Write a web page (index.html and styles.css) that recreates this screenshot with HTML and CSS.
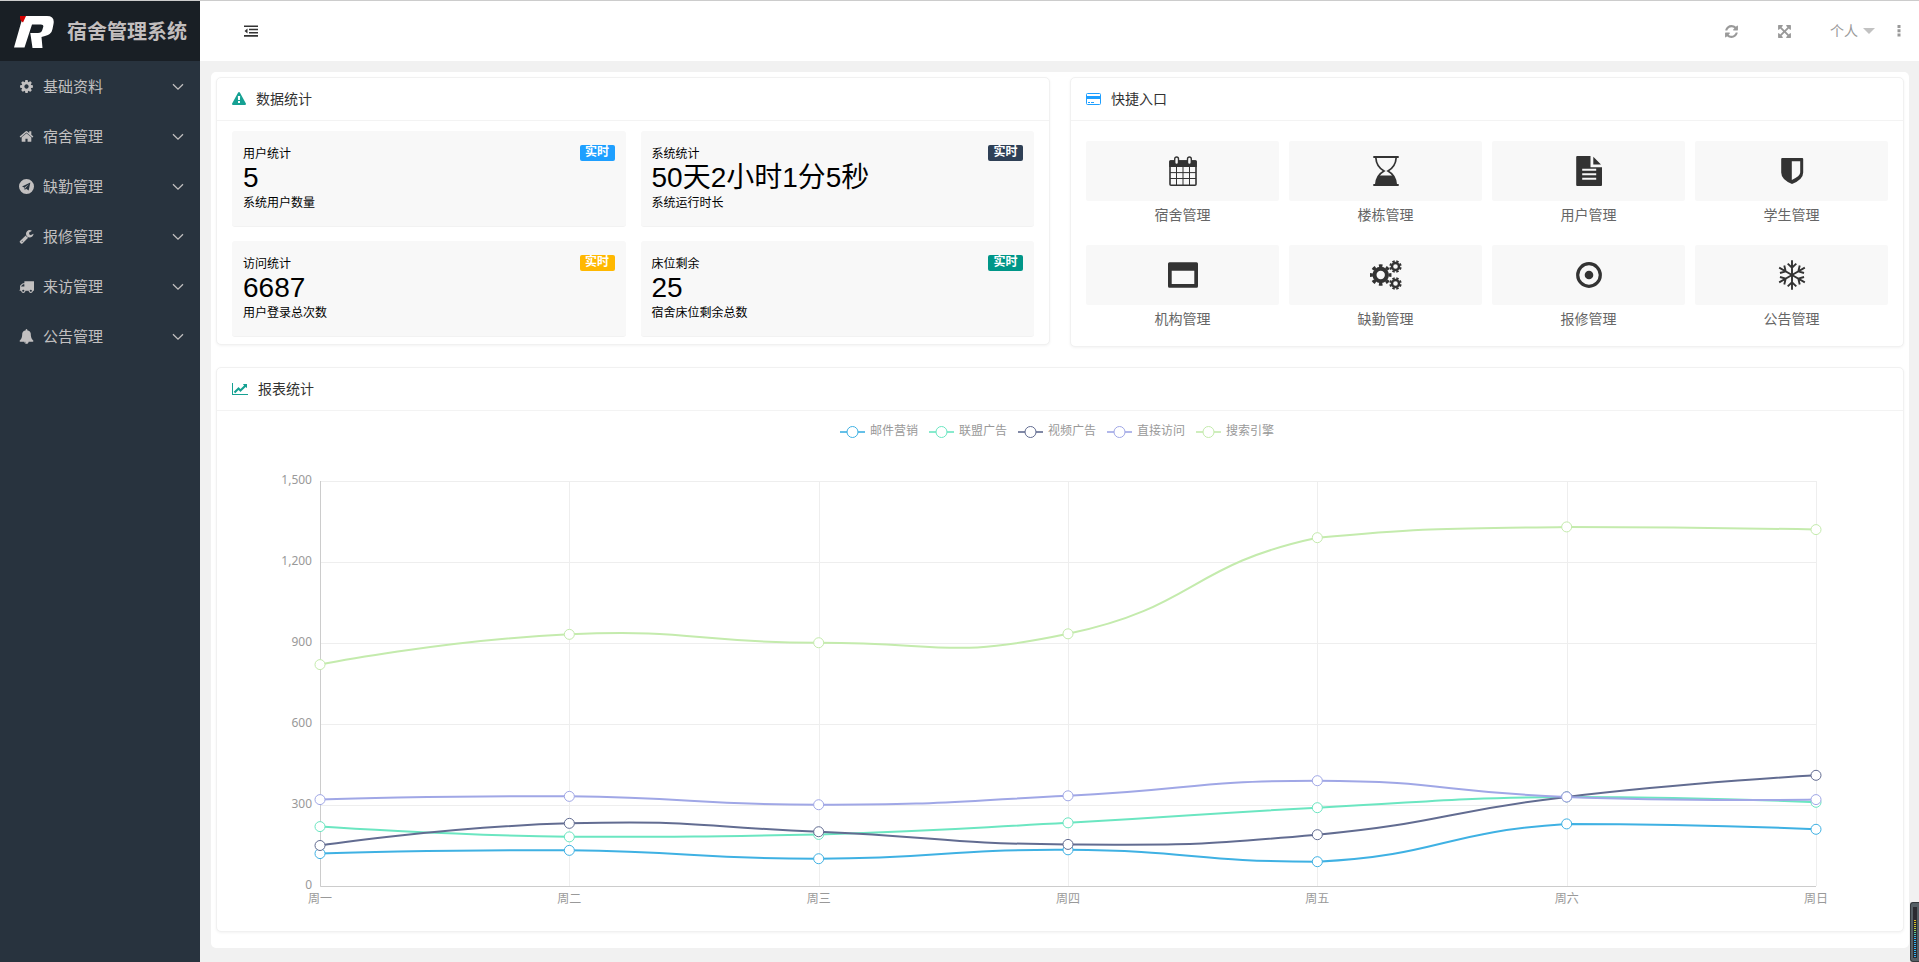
FILE: index.html
```
<!DOCTYPE html>
<html lang="zh-CN">
<head>
<meta charset="utf-8">
<title>宿舍管理系统</title>
<link rel="stylesheet" href="styles.css">
</head>
<body>
<svg class="defs" aria-hidden="true">
  <symbol id="i-chevron" viewBox="0 0 12 8"><path d="M1 1.200l5 5 5-5" fill="none" stroke="currentColor" stroke-width="1.300"/></symbol>
  <symbol id="i-cog" viewBox="0 0 1792 1792"><path d="M1152 896q0-106-75-181t-181-75-181 75-75 181 75 181 181 75 181-75 75-181zm512-109v222q0 12-8 23t-20 13l-185 28q-19 54-39 91 35 50 107 138 10 12 10 25t-9 23q-27 37-99 108t-94 71q-12 0-26-9l-138-108q-44 23-91 38-16 136-29 186-7 28-36 28h-222q-14 0-24.500-8.500t-11.500-21.500l-28-184q-49-16-90-37l-141 107q-10 9-25 9-14 0-25-11-126-114-165-168-7-10-7-23 0-12 8-23 15-21 51-66.500t54-70.500q-27-50-41-99l-183-27q-13-2-21-12.500t-8-23.500v-222q0-12 8-23t19-13l186-28q14-46 39-92-40-57-107-138-10-12-10-24 0-10 9-23 26-36 98.500-107.500t94.500-71.500q13 0 26 10l138 107q44-23 91-38 16-136 29-186 7-28 36-28h222q14 0 24.500 8.500t11.500 21.500l28 184q49 16 90 37l142-107q9-9 24-9 13 0 25 10 129 119 165 170 7 8 7 22 0 12-8 23-15 21-51 66.500t-54 70.500q26 50 41 98l183 28q13 2 21 12.500t8 23.500z"/></symbol>
  <symbol id="i-home" viewBox="0 0 1792 1792"><path d="M1472 992v480q0 26-19 45t-45 19h-384v-384h-256v384h-384q-26 0-45-19t-19-45v-480q0-1 .5-3t.5-3l575-474 575 474q1 2 1 6zm223-69l-62 74q-8 9-21 11h-3q-13 0-21-7l-692-577-692 577q-12 8-24 7-13-2-21-11l-62-74q-8-10-7-23.500t11-21.500l719-599q32-26 76-26t76 26l244 204v-195q0-14 9-23t23-9h192q14 0 23 9t9 23v408l219 182q10 8 11 21.500t-7 23.500z"/></symbol>
  <symbol id="i-plane" viewBox="0 0 14 14"><path fill-rule="evenodd" d="M7 0a7 7 0 1 1 0 14a7 7 0 1 1 0-14zM10.600 3.300L2.800 6.900l2.100 1 .5 2.400 1.200-1.300 2.400 1.700zM9.300 5L5.900 8.300l-.3 1-.2-1.600z"/></symbol>
  <symbol id="i-wrench" viewBox="0 0 1792 1792"><path d="M448 1472q0-26-19-45t-45-19-45 19-19 45 19 45 45 19 45-19 19-45zm644-420l-682 682q-37 37-90 37-52 0-91-37l-106-108q-38-36-38-90 0-53 38-91l681-681q39 98 114.500 173.500t173.500 114.500zm634-435q0 39-23 106-47 134-164.500 217.500t-258.500 83.500q-185 0-316.500-131.500t-131.500-316.500 131.500-316.500 316.500-131.500q58 0 121.500 16.500t107.500 46.500q16 11 16 28t-16 28l-293 169v224l193 107q5-3 79-48.500t135.500-81 70.500-35.500q15 0 23.500 10t8.500 25z"/></symbol>
  <symbol id="i-truck" viewBox="0 0 1792 1792"><path d="M640 1408q0-52-38-90t-90-38-90 38-38 90 38 90 90 38 90-38 38-90zm-384-512h384v-256h-158q-13 0-22 9l-195 195q-9 9-9 22v30zm1280 512q0-52-38-90t-90-38-90 38-38 90 38 90 90 38 90-38 38-90zm256-1088v1024q0 15-4 26.500t-13.500 18.500-16.500 11.500-23.500 6-22.500 2-25.500 0-22.500-.5q0 106-75 181t-181 75-181-75-75-181h-384q0 106-75 181t-181 75-181-75-75-181h-64q-3 0-22.500.5t-25.500 0-22.500-2-23.500-6-16.500-11.500-13.500-18.500-4-26.500q0-26 19-45t45-19v-320q0-8-.5-35t0-38 2.500-34.500 6.500-37 14-30.500 22.500-30l198-198q19-19 50.500-32t58.500-13h160v-192q0-26 19-45t45-19h1024q26 0 45 19t19 45z"/></symbol>
  <symbol id="i-bell" viewBox="0 0 1792 1792"><path d="M912 1696q0-16-16-16-59 0-101.500-42.500t-42.500-101.500q0-16-16-16t-16 16q0 73 51.500 124.500t124.500 51.500q16 0 16-16zm816-288q0 52-38 90t-90 38h-448q0 106-75 181t-181 75-181-75-75-181h-448q-52 0-90-38t-38-90q50-42 91-88t85-119.500 74.500-158.500 50-206 19.500-260q0-152 117-282.500t307-158.500q-8-19-8-39 0-40 28-68t68-28 68 28 28 68q0 20-8 39 190 28 307 158.500t117 282.500q0 139 19.500 260t50 206 74.500 158.500 85 119.500 91 88z"/></symbol>
  <symbol id="i-outdent" viewBox="0 0 14 12"><path d="M0 .5h14v1.600H0zM5 3.700h9v1.600H5zM5 6.900h9v1.600H5zM0 10.100h14v1.600H0zM3.500 3.400v5L.5 5.900z"/></symbol>
  <symbol id="i-refresh" viewBox="0 0 1792 1792"><path d="M1639 1056q0 5-1 7-64 268-268 434.500t-478 166.500q-146 0-282.500-55t-243.500-157l-129 129q-19 19-45 19t-45-19-19-45v-448q0-26 19-45t45-19h448q26 0 45 19t19 45-19 45l-137 137q71 66 161 102t187 36q134 0 250-65t186-179q11-17 53-117 8-23 30-23h192q13 0 22.500 9.500t9.500 22.500zm25-800v448q0 26-19 45t-45 19h-448q-26 0-45-19t-19-45 19-45l138-138q-148-137-349-137-134 0-250 65t-186 179q-11 17-53 117-8 23-30 23h-199q-13 0-22.500-9.500t-9.500-22.500v-7q65-268 270-434.500t480-166.500q146 0 284 55.500t245 156.500l130-129q19-19 45-19t45 19 19 45z"/></symbol>
  <symbol id="i-expand" viewBox="0 0 1792 1792"><path d="M1411 541l-355 355 355 355 144-144q29-31 70-14 39 17 39 59v448q0 26-19 45t-45 19h-448q-42 0-59-40-17-39 14-69l144-144-355-355-355 355 144 144q31 30 14 69-17 40-59 40h-448q-26 0-45-19t-19-45v-448q0-42 40-59 39-17 69 14l144 144 355-355-355-355-144 144q-19 19-45 19-12 0-24-5-40-17-40-59v-448q0-26 19-45t45-19h448q42 0 59 40 17 39-14 69l-144 144 355 355 355-355-144-144q-31-30-14-69 17-40 59-40h448q26 0 45 19t19 45v448q0 42-39 59-13 5-25 5-26 0-45-19z"/></symbol>
  <symbol id="i-dots" viewBox="0 0 4 12"><path d="M.5 0h3v3h-3zM.5 4.300h3v3h-3zM.5 8.600h3v3h-3z"/></symbol>
  <symbol id="i-warning" viewBox="0 0 1792 1792"><path d="M1024 1375v-190q0-14-9.500-23.500t-22.500-9.500h-192q-13 0-22.500 9.500t-9.500 23.500v190q0 14 9.500 23.500t22.500 9.500h192q13 0 22.500-9.500t9.500-23.500zm-2-374l18-459q0-12-10-19-13-11-24-11h-220q-11 0-24 11-10 7-10 21l17 457q0 10 10 16.500t24 6.500h185q14 0 23.500-6.500t10.500-16.500zm-14-934l768 1408q35 63-2 126-17 29-46.500 46t-63.500 17h-1536q-34 0-63.500-17t-46.500-46q-37-63-2-126l768-1408q17-31 47-49t65-18 65 18 47 49z"/></symbol>
  <symbol id="i-card" viewBox="0 0 15 12"><rect x=".5" y=".5" width="14" height="11" rx="1" fill="none" stroke="currentColor"/><path d="M1 3h13v3H1zM2 9h2v1H2zM5 9h3v1H5z"/></symbol>
  <symbol id="i-line" viewBox="0 0 2048 1792"><path d="M2048 1536v128h-2048v-1536h128v1408h1920zm-128-1248v435q0 21-19.500 29.500t-35.500-7.500l-121-121-633 633q-10 10-23 10t-23-10l-233-233-416 416-192-192 585-585q10-10 23-10t23 10l233 233 464-464-121-121q-16-16-7.500-35.500t29.500-19.500h435q14 0 23 9t9 23z"/></symbol>
  <symbol id="b-calendar" viewBox="0 0 32 30"><rect x="3" y="5" width="26" height="24.200" rx="1" fill="none" stroke="currentColor" stroke-width="1.600"/><path d="M2.200 5.500q0-1.300 1.300-1.300h25q1.300 0 1.300 1.300V11H2.200z"/><rect x="7.700" y="1" width="3.800" height="7.500" rx="1.900" fill="#f8f8f8" stroke="currentColor" stroke-width="1.400"/><rect x="20.500" y="1" width="3.800" height="7.500" rx="1.900" fill="#f8f8f8" stroke="currentColor" stroke-width="1.400"/><path d="M9.500 11v18M16 11v18M22.500 11v18M3 16.600h26M3 22.500h26" stroke="currentColor" stroke-width="1"/></symbol>
  <symbol id="b-hourglass" viewBox="0 0 32 30"><path d="M3.300 1h25.400M3.300 29h25.400" stroke="currentColor" stroke-width="1.800"/><path d="M5.800 1.500C6.200 9 10.500 13 14 15C10.500 17 6.200 21 5.800 28.500M26.200 1.500C25.800 9 21.500 13 18 15C21.500 17 25.800 21 26.200 28.500" fill="none" stroke="currentColor" stroke-width="1.700"/><path d="M8.700 19.600h14.600Q26 23.500 26.200 28.500H5.800Q6 23.500 8.700 19.600z"/></symbol>
  <symbol id="b-file" viewBox="0 0 32 30"><path fill-rule="evenodd" d="M4.200 0H17.500V11.300H29V29q0 1-1 1H4.200q-1 0-1-1V1q0-1 1-1zM9.200 12.800v2h14v-2zM9.200 17.300v2h14v-2zM9.200 21.700v2h14v-2zM20.300.8L28 8.600H20.300z"/></symbol>
  <symbol id="b-shield" viewBox="0 0 32 30"><path fill-rule="evenodd" d="M6.200 2h20q1 0 1 1v13.500Q27.200 23.500 16 28Q5.200 23.500 5.200 16.500V3q0-1 1-1zM15.800 5.200V24Q24.200 20 24.200 16.500V5.200z"/></symbol>
  <symbol id="b-window" viewBox="0 0 32 30"><path fill-rule="evenodd" d="M2.500 2.200h27q1.500 0 1.500 1.500v22.600q0 1.500-1.500 1.500h-27q-1.500 0-1.500-1.500V3.700q0-1.500 1.500-1.500zM4.700 10.700v13.400h22.600V10.700z"/></symbol>
  <symbol id="b-gears" viewBox="0 0 32 30"><g fill="none" stroke="currentColor"><circle cx="10.700" cy="15" r="6.200" stroke-width="4"/><circle cx="10.700" cy="15" r="9.300" stroke-width="3" pathLength="16" stroke-dasharray="1 1" stroke-dashoffset=".5"/><circle cx="25.500" cy="6.500" r="3.500" stroke-width="2.400"/><circle cx="25.500" cy="6.500" r="5.200" stroke-width="2" pathLength="16" stroke-dasharray="1.200 .8" stroke-dashoffset="1.600"/><circle cx="25.500" cy="23.500" r="3.500" stroke-width="2.400"/><circle cx="25.500" cy="23.500" r="5.200" stroke-width="2" pathLength="16" stroke-dasharray="1.200 .8" stroke-dashoffset="1.600"/></g></symbol>
  <symbol id="b-target" viewBox="0 0 32 30"><circle cx="16" cy="15" r="11.300" fill="none" stroke="currentColor" stroke-width="3.200"/><circle cx="16" cy="15" r="4.300"/></symbol>
  <symbol id="b-snow" viewBox="0 0 32 30"><g fill="none" stroke="currentColor" stroke-width="1.900"><path id="arm" d="M16 15V.2M11.700 3.600L16 7.700L20.300 3.600"/><use href="#arm" transform="rotate(60 16 15)"/><use href="#arm" transform="rotate(120 16 15)"/><use href="#arm" transform="rotate(180 16 15)"/><use href="#arm" transform="rotate(240 16 15)"/><use href="#arm" transform="rotate(300 16 15)"/></g></symbol>
</svg>

<div class="app">
  <aside class="side">
    <a class="brand" href="#">
      <svg class="logo" viewBox="0 0 40 34" aria-hidden="true">
        <path fill="#fff" d="M9 1H33Q41 1 39.500 9L38.500 14Q37.500 19.500 31 21L27.500 22L28.500 33H18.500L16.300 18H24Q27.500 18 28.300 15L29.200 12Q30 9.500 27 9.500H18L10.500 32.500H0z"/>
        <path fill="#d40000" d="M6 1h6l-3 6.500q-3.500-2-3-6.500z"/>
      </svg>
      <span>宿舍管理系统</span>
    </a>
    <nav>
      <ul class="menu">
        <li><button class="menu-item"><svg class="mi"><use href="#i-cog"/></svg><span>基础资料</span><svg class="chev"><use href="#i-chevron"/></svg></button></li>
        <li><button class="menu-item"><svg class="mi"><use href="#i-home"/></svg><span>宿舍管理</span><svg class="chev"><use href="#i-chevron"/></svg></button></li>
        <li><button class="menu-item"><svg class="mi"><use href="#i-plane"/></svg><span>缺勤管理</span><svg class="chev"><use href="#i-chevron"/></svg></button></li>
        <li><button class="menu-item"><svg class="mi"><use href="#i-wrench"/></svg><span>报修管理</span><svg class="chev"><use href="#i-chevron"/></svg></button></li>
        <li><button class="menu-item"><svg class="mi"><use href="#i-truck"/></svg><span>来访管理</span><svg class="chev"><use href="#i-chevron"/></svg></button></li>
        <li><button class="menu-item"><svg class="mi"><use href="#i-bell"/></svg><span>公告管理</span><svg class="chev"><use href="#i-chevron"/></svg></button></li>
      </ul>
    </nav>
  </aside>

  <div class="main">
    <header class="topbar">
      <button class="tool fold" aria-label="收起菜单"><svg width="14" height="12"><use href="#i-outdent"/></svg></button>
      <div class="tools">
        <button class="tool" aria-label="刷新"><svg width="15" height="15"><use href="#i-refresh"/></svg></button>
        <button class="tool" aria-label="全屏"><svg width="15" height="15"><use href="#i-expand"/></svg></button>
        <button class="tool user">个人<i class="caret"></i></button>
        <button class="tool more" aria-label="更多"><svg width="4" height="12"><use href="#i-dots"/></svg></button>
      </div>
    </header>

    <main class="content">
      <div class="panel">
        <div class="row">
          <section class="card">
            <h2 class="card-head"><svg class="teal" width="14" height="14"><use href="#i-warning"/></svg>数据统计</h2>
            <div class="stats">
              <article class="stat"><div><h3>用户统计</h3><strong>5</strong><p>系统用户数量</p></div><span class="badge blue">实时</span></article>
              <article class="stat"><div><h3>系统统计</h3><strong>50天2小时1分5秒</strong><p>系统运行时长</p></div><span class="badge navy">实时</span></article>
              <article class="stat"><div><h3>访问统计</h3><strong>6687</strong><p>用户登录总次数</p></div><span class="badge orange">实时</span></article>
              <article class="stat"><div><h3>床位剩余</h3><strong>25</strong><p>宿舍床位剩余总数</p></div><span class="badge green">实时</span></article>
            </div>
          </section>
          <section class="card">
            <h2 class="card-head"><svg class="azure" width="15" height="12"><use href="#i-card"/></svg>快捷入口</h2>
            <div class="links">
              <a class="link" href="#"><span class="tile"><svg><use href="#b-calendar"/></svg></span>宿舍管理</a>
              <a class="link" href="#"><span class="tile"><svg><use href="#b-hourglass"/></svg></span>楼栋管理</a>
              <a class="link" href="#"><span class="tile"><svg><use href="#b-file"/></svg></span>用户管理</a>
              <a class="link" href="#"><span class="tile"><svg><use href="#b-shield"/></svg></span>学生管理</a>
              <a class="link" href="#"><span class="tile"><svg><use href="#b-window"/></svg></span>机构管理</a>
              <a class="link" href="#"><span class="tile"><svg><use href="#b-gears"/></svg></span>缺勤管理</a>
              <a class="link" href="#"><span class="tile"><svg><use href="#b-target"/></svg></span>报修管理</a>
              <a class="link" href="#"><span class="tile"><svg><use href="#b-snow"/></svg></span>公告管理</a>
            </div>
          </section>
        </div>
        <section class="card">
          <h2 class="card-head"><svg class="teal" width="16" height="14"><use href="#i-line"/></svg>报表统计</h2>
          <div class="chart-box">
            <ul class="legend" id="legend"></ul>
            <svg class="chart" id="chart" role="img" aria-label="报表统计"></svg>
          </div>
        </section>
      </div>
    </main>
  </div>
</div>
<div class="meter" aria-hidden="true"><div class="meter-slot"><div class="meter-leds"></div></div></div>
<script src="chart.js"></script>
</body>
</html>
```

FILE: styles.css
```
* { box-sizing: border-box; }
body {
  margin: 0;
  background: #f1f1f1;
  color: #333;
  font: 14px/20px "Liberation Sans", "Noto Sans CJK SC", sans-serif;
}
h2, h3, p, ul { margin: 0; padding: 0; font-weight: 400; list-style: none; }
button { border: 0; padding: 0; background: none; font: inherit; color: inherit; cursor: pointer; }
a { color: inherit; text-decoration: none; }
svg { display: block; fill: currentColor; flex: none; }
.defs { position: absolute; width: 0; height: 0; }

.app { display: flex; min-height: 100vh; border-top: 1px solid #ccc; }
.side { flex: none; width: 200px; background: #28333e; color: #c2c0c0; }
.brand {
  display: flex; align-items: center; gap: 13px;
  height: 60px; padding: 2px 0 0 14px;
  background: #191f25; color: #c2bebe;
  font-size: 20px; line-height: 30px; font-weight: 700; white-space: nowrap;
}
.logo { width: 40px; height: 34px; }
.menu-item {
  display: flex; align-items: center; gap: 9px;
  width: 100%; height: 50px; padding: 1px 16px 0 19px;
  font-size: 15px; text-align: left;
}
.menu-item span { flex: 1; }
.mi { width: 15px; height: 15px; }
.chev { width: 12px; height: 8px; }

.main { flex: 1; min-width: 0; display: flex; flex-direction: column; }
.topbar {
  display: flex; align-items: center; justify-content: space-between;
  height: 60px; padding: 0 18px 0 44px; background: #fff;
}
.tool { display: flex; align-items: center; color: #999; }
.fold { color: #333; }
.tools { display: flex; align-items: center; gap: 38px; }
.user { gap: 5px; }
.more { margin-left: -16px; }
.caret { border: 6px solid transparent; border-top-color: #c2c2c2; border-bottom: 0; }

.content { padding: 11px 10px 15px 11px; }
.panel { padding: 5px 5px 16px; background: #fff; border-radius: 5px; }
.row { display: grid; grid-template-columns: 1fr 1fr; gap: 20px; align-items: start; margin-bottom: 20px; }
.card { border: 1px solid #f1f1f1; border-radius: 5px; box-shadow: 0 1px 3px rgba(0, 0, 0, .05); background: #fff; }
.card-head {
  display: flex; align-items: center; gap: 10px;
  height: 43px; padding: 0 15px; border-bottom: 1px solid #f3f3f3;
  font-size: 14px;
}
.teal { color: #16a193; }
.azure { color: #1e9fff; }

.stats { display: grid; grid-template-columns: 1fr 1fr; gap: 14px 15px; padding: 10px 15px 7px; }
.stat {
  display: flex; justify-content: space-between; align-items: flex-start;
  padding: 14px 11px; background: #f8f8f8; color: #000;
  border-radius: 3px; border-bottom: 1px solid #f2f2f2;
  font-size: 12px; line-height: 18px;
}
.stat h3 { font-size: 12px; }
.stat strong { display: block; margin-bottom: 1px; font-size: 28px; line-height: 30px; font-weight: 400; }
.badge { width: 35px; height: 16px; border-radius: 2px; color: #fff; font-weight: 700; line-height: 15px; text-align: center; }
.blue { background: #1e9fff; }
.navy { background: #2f4056; }
.orange { background: #ffb800; }
.green { background: #009688; }

.links { display: grid; grid-template-columns: repeat(4, 1fr); gap: 16px 10px; padding: 20px 15px 13px; }
.link { color: #666; line-height: 28px; text-align: center; }
.tile {
  display: flex; align-items: center; justify-content: center;
  height: 60px; background: #f8f8f8; border-radius: 2px; color: #333;
}
.tile svg { width: 32px; height: 30px; }

.chart-box { padding: 11px 15px 8px; }
.legend { display: flex; justify-content: center; gap: 11px; padding-right: 6px; color: #999; font-size: 12px; line-height: 18px; }
.legend li { display: flex; align-items: center; gap: 5px; }
.chart { width: 100%; height: 483px; }
.chart text { fill: #999; font: 12px "Noto Sans", "Noto Sans CJK SC", sans-serif; }

.meter {
  position: fixed; right: 0; bottom: 0; width: 9px; height: 60px; padding: 4px 2px 3px;
  background: #555f65; border: solid #33383c; border-width: 1px 0 1px 1px; border-radius: 3px 0 0 3px;
}
.meter-slot { height: 100%; padding: 13px 1px 0; background: #2a2a30; }
.meter-leds {
  height: 37px;
  background: repeating-linear-gradient(transparent 0 1px, #2a2a30 1px 2px),
    linear-gradient(#e8b923, #b9d13c 25%, #4cc9a0 35%, #35b4f0 50%);
}
```

FILE: chart.js
```
const days = ['周一', '周二', '周三', '周四', '周五', '周六', '周日'];
const series = [
  { name: '邮件营销', color: '#3fb1e3', data: [120, 132, 101, 134, 90, 230, 210] },
  { name: '联盟广告', color: '#6be6c1', data: [220, 182, 191, 234, 290, 330, 310] },
  { name: '视频广告', color: '#626c91', data: [150, 232, 201, 154, 190, 330, 410] },
  { name: '直接访问', color: '#a0a7e6', data: [320, 332, 301, 334, 390, 330, 320] },
  { name: '搜索引擎', color: '#c4ebad', data: [820, 932, 901, 934, 1290, 1330, 1320] }
];

document.getElementById('legend').innerHTML = series.map(s =>
  `<li><svg width="25" height="14"><path d="M0 8H25" stroke="${s.color}" stroke-width="2" opacity=".8"/>` +
  `<circle cx="12.500" cy="8" r="5.500" fill="#fff" stroke="${s.color}"/></svg>${s.name}</li>`).join('');

// Smooth path through the points; control points stay inside the series' bounds.
function smoothPath(pts) {
  const ys = pts.map(p => p[1]);
  const lo = Math.min(...ys), hi = Math.max(...ys);
  const clamp = y => Math.min(hi, Math.max(lo, y));
  const dist = (a, b) => Math.hypot(a[0] - b[0], a[1] - b[1]);
  let d = `M${pts[0]}`, c0 = pts[0];
  for (let i = 1; i < pts.length; i++) {
    const p = pts[i], prev = pts[i - 1], next = pts[i + 1];
    let c1 = p, after = p;
    if (next) {
      const v = [next[0] - prev[0], next[1] - prev[1]];
      const r = dist(p, next) / (dist(p, next) + dist(p, prev));
      c1 = [p[0] - v[0] * 0.5 * (1 - r), clamp(p[1] - v[1] * 0.5 * (1 - r))];
      after = [p[0] + v[0] * 0.5 * r, clamp(p[1] + v[1] * 0.5 * r)];
    }
    d += `C${c0} ${c1} ${p}`;
    c0 = after;
  }
  return d;
}

function draw() {
  const svg = document.getElementById('chart');
  const left = 88, right = svg.clientWidth - 72, top = 41, bottom = 446, max = 1500;
  const x = i => left + (right - left) * i / (days.length - 1);
  const y = v => bottom - (bottom - top) * v / max;
  const crisp = n => Math.round(n) + 0.5;
  let out = '';
  for (let v = 0; v <= max; v += 300) {
    out += `<path d="M${left} ${crisp(y(v))}H${right}" stroke="#eee"/>`;
    out += `<text x="${left - 8}" y="${y(v) + 3}" text-anchor="end">${v.toLocaleString('en-US')}</text>`;
  }
  days.forEach((day, i) => {
    out += `<path d="M${crisp(x(i))} ${top}V${bottom}" stroke="#eee"/>`;
    out += `<text x="${x(i)}" y="${bottom + 17}" text-anchor="middle">${day}</text>`;
  });
  out += `<path d="M${left + 0.5} ${top}V${bottom + 0.5}H${right}" fill="none" stroke="#ccc"/>`;
  for (const s of series) {
    const pts = s.data.map((v, i) => [x(i), y(v)]);
    out += `<path d="${smoothPath(pts)}" fill="none" stroke="${s.color}" stroke-width="2"/>`;
    for (const p of pts) out += `<circle cx="${p[0]}" cy="${p[1]}" r="5" fill="#fff" stroke="${s.color}"/>`;
  }
  svg.innerHTML = out;
}

draw();
window.addEventListener('resize', draw);
```
